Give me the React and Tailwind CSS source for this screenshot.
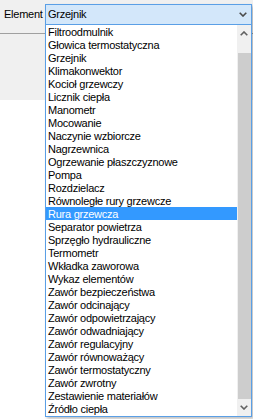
import React from "react";

const items = [
  "Filtroodmulnik",
  "Głowica termostatyczna",
  "Grzejnik",
  "Klimakonwektor",
  "Kocioł grzewczy",
  "Licznik ciepła",
  "Manometr",
  "Mocowanie",
  "Naczynie wzbiorcze",
  "Nagrzewnica",
  "Ogrzewanie płaszczyznowe",
  "Pompa",
  "Rozdzielacz",
  "Równoległe rury grzewcze",
  "Rura grzewcza",
  "Separator powietrza",
  "Sprzęgło hydrauliczne",
  "Termometr",
  "Wkładka zaworowa",
  "Wykaz elementów",
  "Zawór bezpieczeństwa",
  "Zawór odcinający",
  "Zawór odpowietrzający",
  "Zawór odwadniający",
  "Zawór regulacyjny",
  "Zawór równoważący",
  "Zawór termostatyczny",
  "Zawór zwrotny",
  "Zestawienie materiałów",
  "Źródło ciepła",
];

function Chevron({ up = false, color = "#606060" }) {
  return (
    <svg width="8" height="5" viewBox="0 0 8 5" className="block">
      <path
        d={up ? "M0.7 4.3 L4 1 L7.3 4.3" : "M0.7 0.7 L4 4 L7.3 0.7"}
        fill="none"
        stroke={color}
        strokeWidth="1.6"
      />
    </svg>
  );
}

export default function App() {
  return (
    <div className="relative w-[253px] h-[419px] overflow-hidden flex flex-col bg-white font-['Liberation_Sans',Arial,sans-serif] text-[11px] tracking-[-0.25px] text-black">
      <div className="h-[33px] bg-[#f0f0f0] pl-[4px] pt-[8px] leading-[13px]">Element</div>
      <div className="h-px bg-[#a0a0a0]" />
      <div className="h-[66px] bg-[#f0f0f0]" />
      <div className="flex-1 bg-white" />

      <div className="absolute left-[45px] top-[4px] w-[207px] flex flex-col shadow-[2px_2px_3px_rgba(0,0,0,0.25)]">
        <div className="h-[21px] border border-[#5a9fe6] bg-[#d3e7fa] flex items-start justify-between">
          <span className="pl-[2px] pt-[3px] leading-[13px]">Grzejnik</span>
          <span className="pr-[4px] pt-[7px]">
            <Chevron color="#4a4a4a" />
          </span>
        </div>
        <div className="flex border-x border-b border-[#5a9fe6] bg-white">
          <div className="w-[191px] flex flex-col pb-px">
            {items.map((it) => (
              <div
                key={it}
                className={
                  it === "Rura grzewcza"
                    ? "h-[13px] leading-[15px] pl-[2px] bg-[#3399ff] text-white whitespace-nowrap"
                    : "h-[13px] leading-[15px] pl-[2px] whitespace-nowrap"
                }
              >
                {it}
              </div>
            ))}
          </div>
          <div className="w-[14px] bg-[#f0f0f0] flex flex-col">
            <div className="h-[17px] flex items-center justify-center">
              <Chevron up />
            </div>
            <div className="h-[11px]" />
            <div className="flex-1 ml-px bg-[#cdcdcd]" />
            <div className="h-[17px] flex items-center justify-center">
              <Chevron />
            </div>
          </div>
        </div>
      </div>
    </div>
  );
}
